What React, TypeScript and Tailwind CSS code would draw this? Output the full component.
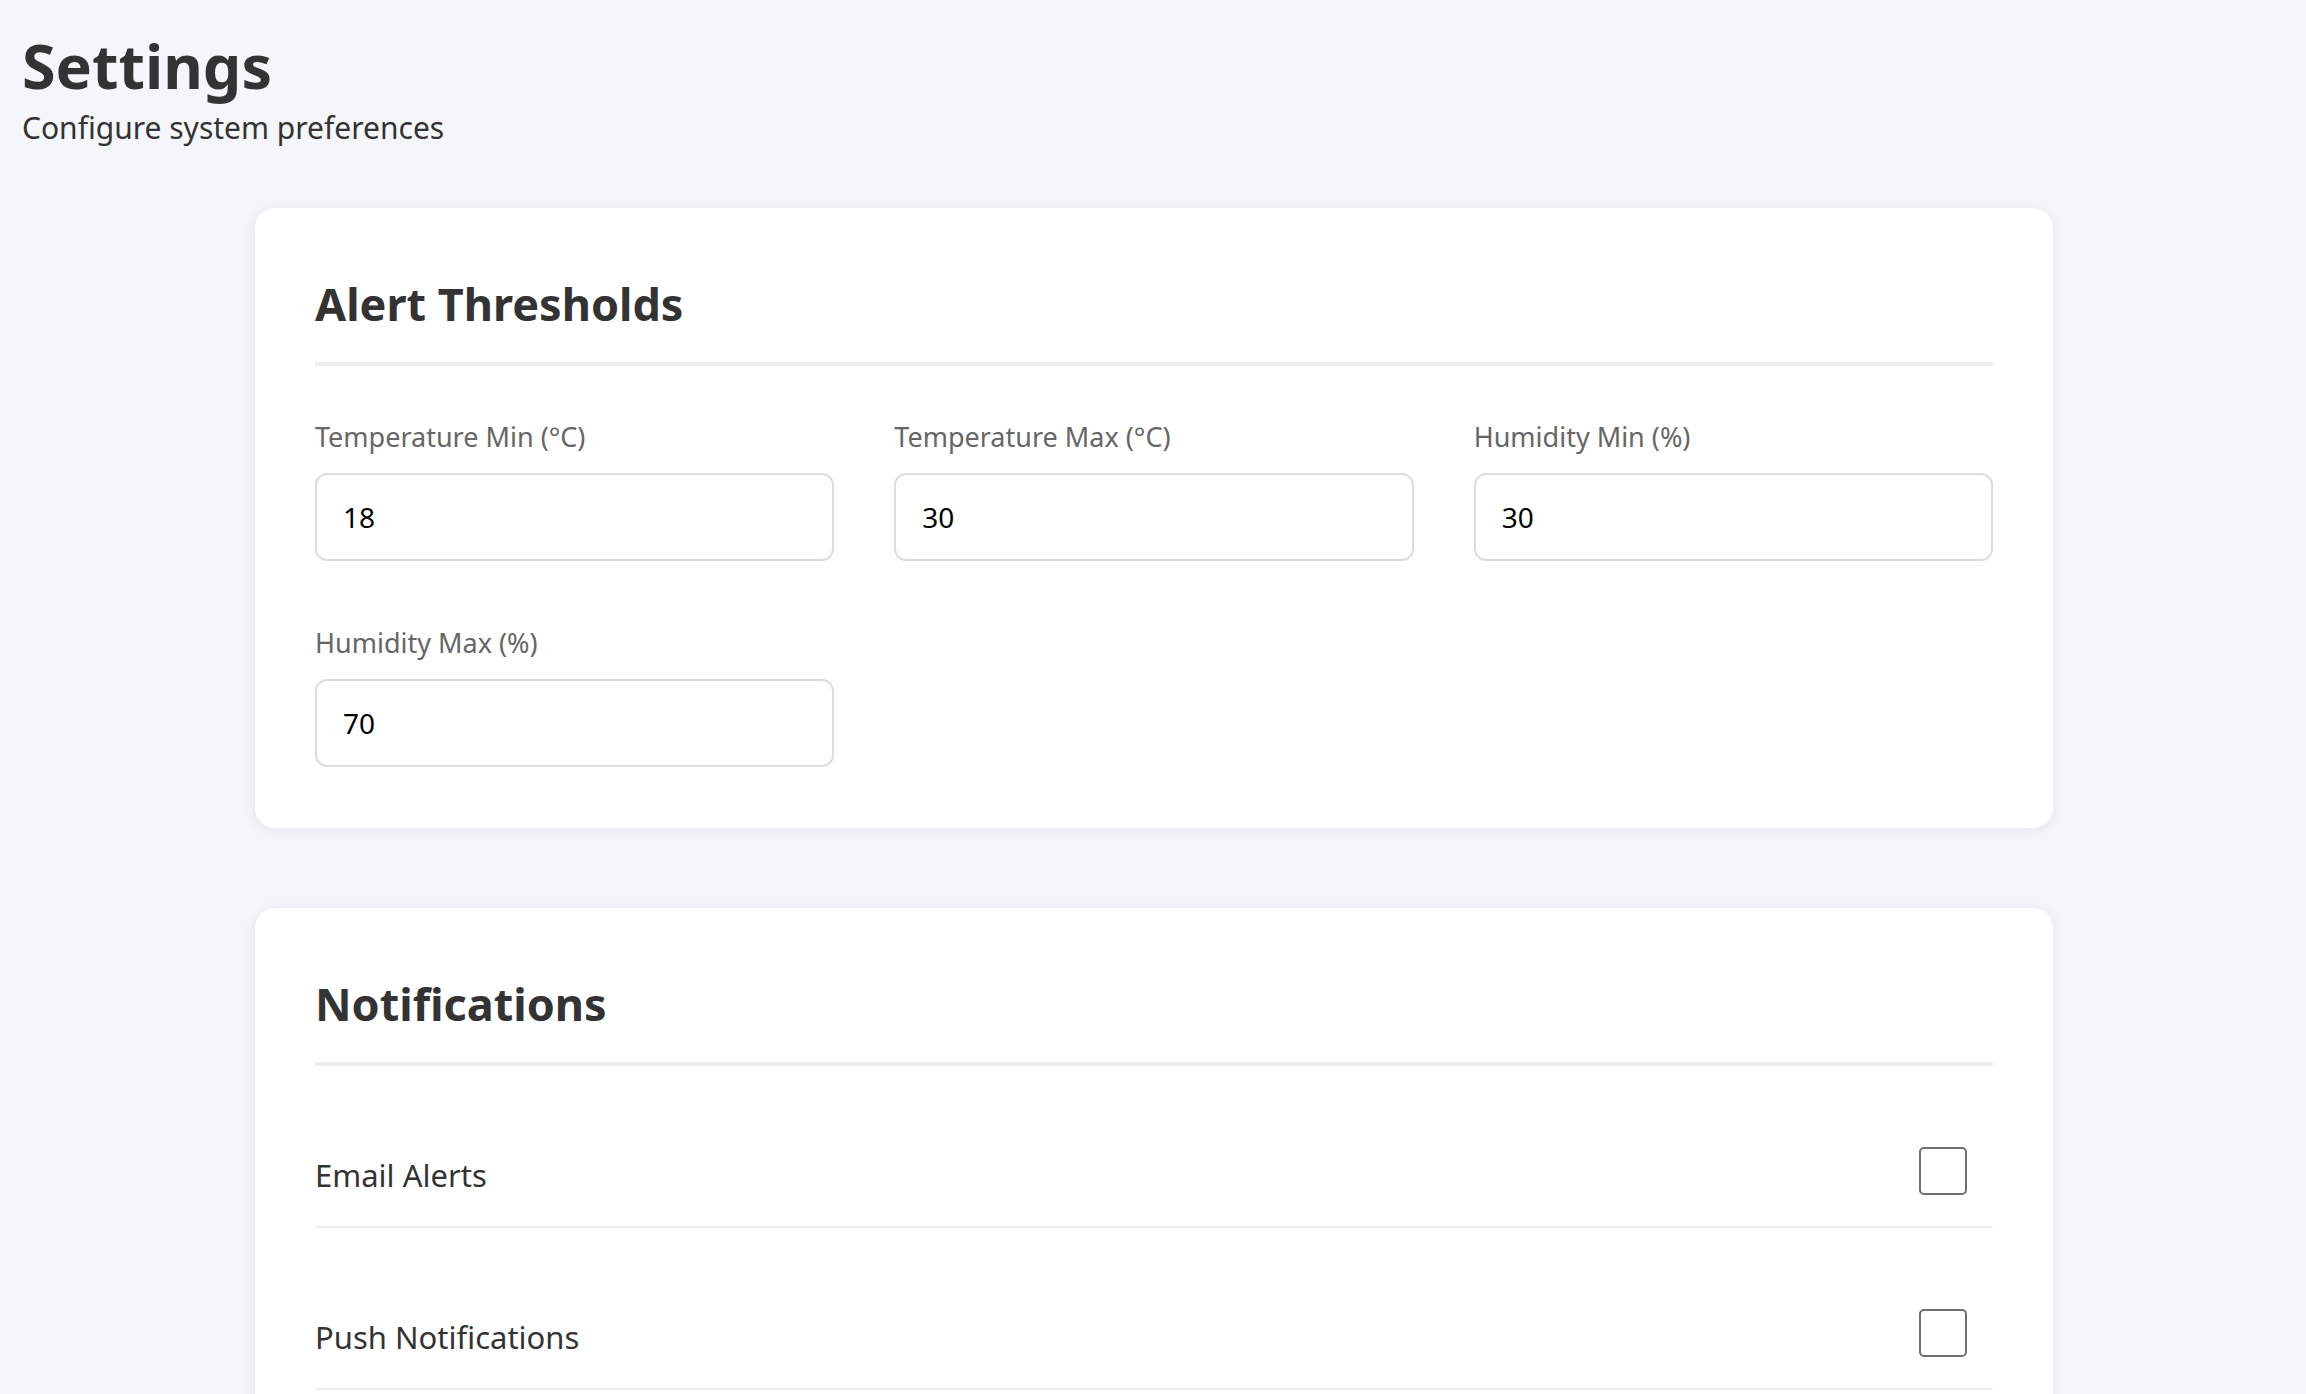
import { useState } from "react"

const fields = [
  { id: "tempMin", label: "Temperature Min (°C)", value: "18" },
  { id: "tempMax", label: "Temperature Max (°C)", value: "30" },
  { id: "humMin", label: "Humidity Min (%)", value: "30" },
  { id: "humMax", label: "Humidity Max (%)", value: "70" },
]

const toggles = [
  { id: "email", label: "Email Alerts" },
  { id: "push", label: "Push Notifications" },
]

function Card({ title, children }: { title: string; children: React.ReactNode }) {
  return (
    <section className="rounded-[20px] bg-white px-[60px] pt-[60px] pb-[61px] shadow-[0_2px_14px_rgba(20,30,60,0.08)]">
      <h2 className="border-b-4 border-[#eeeeee] pt-[2px] pb-[25px] text-[45px] font-bold leading-[67px] text-[#333]">{title}</h2>
      {children}
    </section>
  )
}

export default function App() {
  const [values, setValues] = useState<Record<string, string>>(
    Object.fromEntries(fields.map((f) => [f.id, f.value])),
  )
  const [checked, setChecked] = useState<Record<string, boolean>>({ email: false, push: false })

  return (
    <div className="min-h-screen bg-[#f5f6f9] px-[22px] pt-[25px] pb-[60px] font-['Noto_Sans',sans-serif]">
      <header>
        <h1 className="pt-[2px] text-[61px] font-bold leading-[77px] text-[#333]">Settings</h1>
        <p className="mt-[4px] text-[30px] leading-[40px] text-[#333]">Configure system preferences</p>
      </header>

      <div className="mx-auto mt-[60px] flex w-[1798px] flex-col gap-[80px] pl-[2px] box-content">
        <Card title="Alert Thresholds">
          <div className="mt-[51px] grid grid-cols-3 gap-x-[60px] gap-y-[62px]">
            {fields.map((f) => (
              <div key={f.id}>
                <label htmlFor={f.id} className="mb-[16px] block text-[27px] leading-[40px] text-[#666]">
                  {f.label}
                </label>
                <input
                  id={f.id}
                  type="number"
                  value={values[f.id]}
                  onChange={(e) => setValues({ ...values, [f.id]: e.target.value })}
                  className="h-[88px] w-full rounded-[12px] border-2 border-[#dddddd] bg-white px-[26px] text-[28px] text-black outline-none [appearance:textfield] [&::-webkit-inner-spin-button]:appearance-none"
                />
              </div>
            ))}
          </div>
        </Card>

        <Card title="Notifications">
          {toggles.map((t) => (
            <div
              key={t.id}
              className="mt-[50px] flex items-center justify-between border-b-2 border-[#eeeeee] py-[31px]"
            >
              <span className="pt-[8px] text-[31px] leading-[40px] text-[#333]">{t.label}</span>
              <input
                type="checkbox"
                checked={checked[t.id]}
                onChange={(e) => setChecked({ ...checked, [t.id]: e.target.checked })}
                className="mr-[26px] h-[48px] w-[48px] appearance-none rounded-[5px] border-2 border-[#707070] bg-white"
              />
            </div>
          ))}
        </Card>
      </div>
    </div>
  )
}
